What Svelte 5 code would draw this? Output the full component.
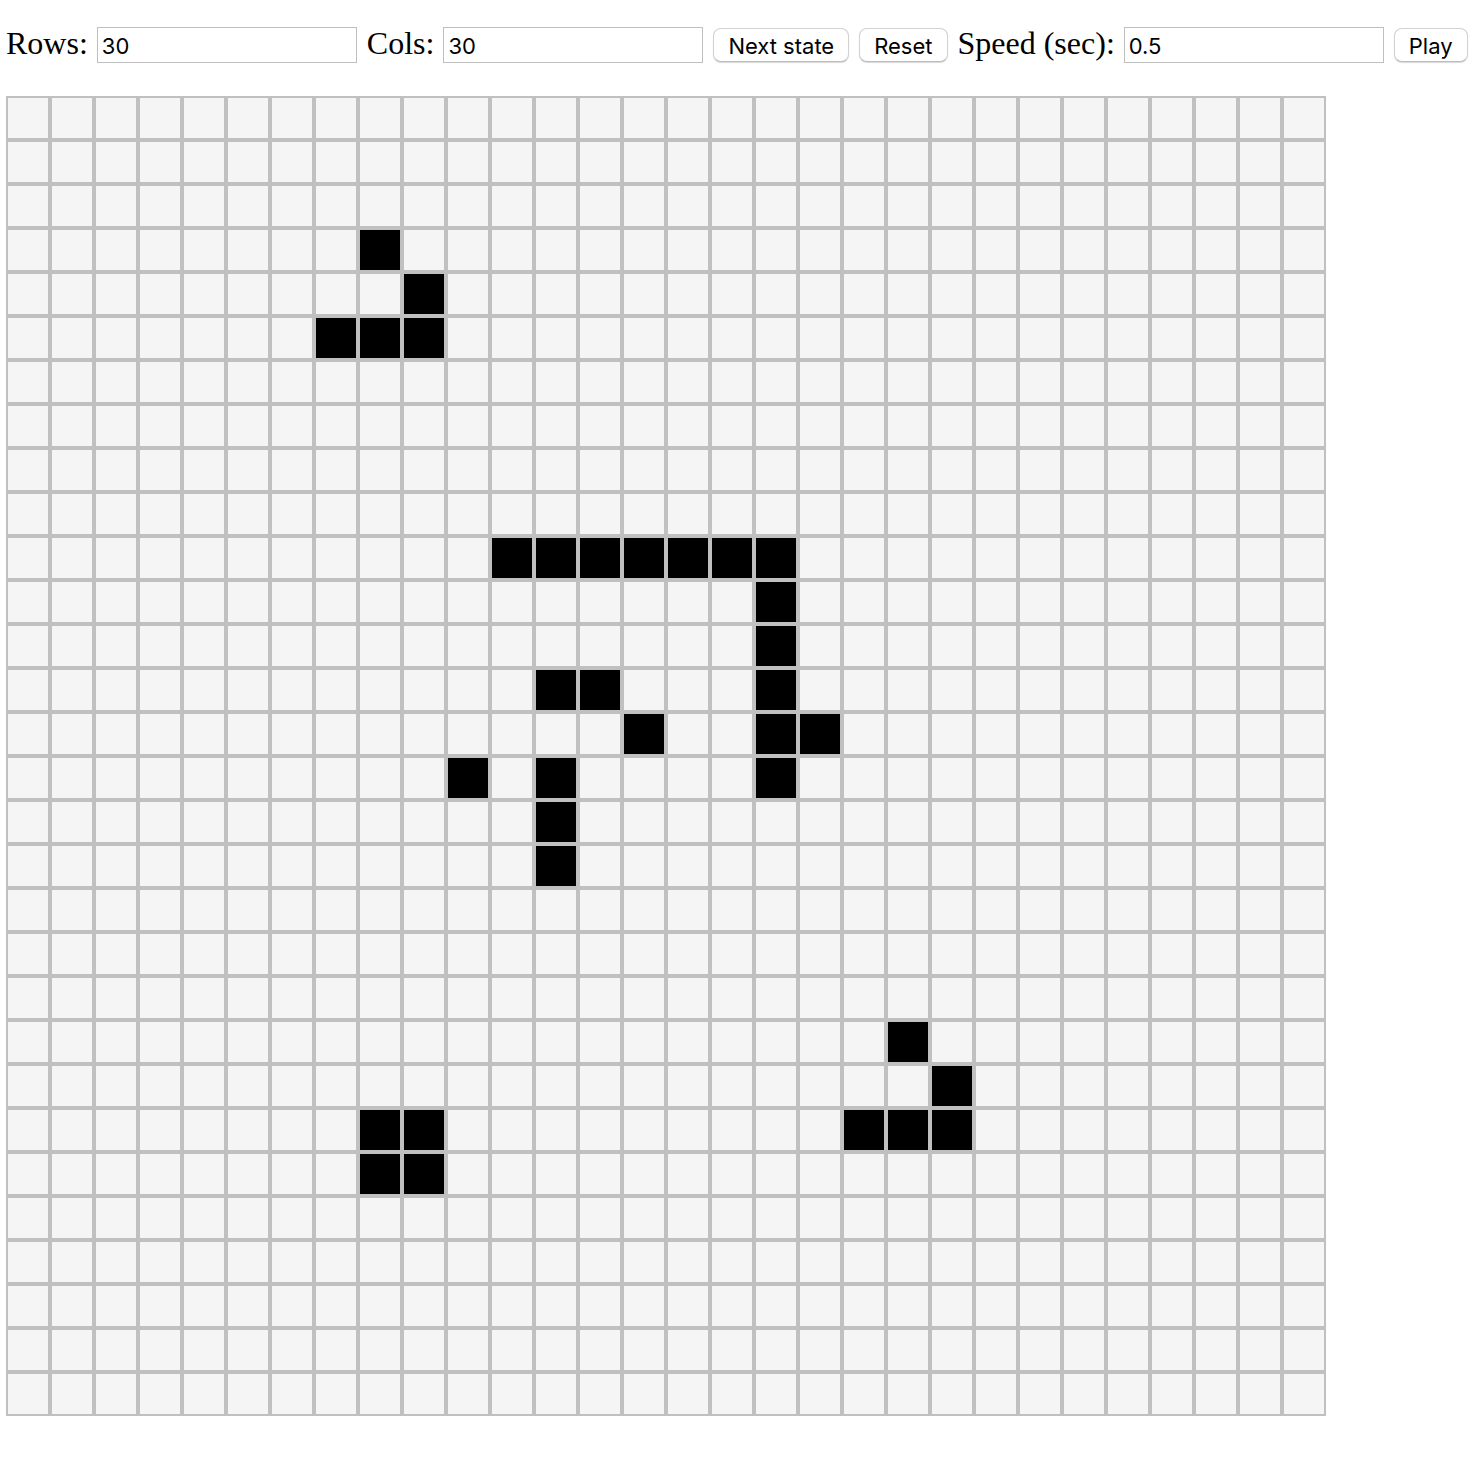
<script>
  const initial = [
    [3, 8],
    [4, 9],
    [5, 7], [5, 8], [5, 9],
    [10, 11], [10, 12], [10, 13], [10, 14], [10, 15], [10, 16], [10, 17],
    [11, 17],
    [12, 17],
    [13, 12], [13, 13], [13, 17],
    [14, 14], [14, 17], [14, 18],
    [15, 10], [15, 12], [15, 17],
    [16, 12],
    [17, 12],
    [21, 20],
    [22, 21],
    [23, 8], [23, 9], [23, 19], [23, 20], [23, 21],
    [24, 8], [24, 9],
  ];

  const key = (r, c) => `${r},${c}`;

  let rowsText = $state('30');
  let colsText = $state('30');
  let speed = $state('0.5');
  let playing = $state(false);
  let alive = $state.raw(new Set(initial.map(([r, c]) => key(r, c))));

  const clampSize = (text) => Math.min(100, Math.max(1, parseInt(text, 10) || 1));
  const rows = $derived(clampSize(rowsText));
  const cols = $derived(clampSize(colsText));

  function neighbours(r, c) {
    let count = 0;
    for (let dr = -1; dr <= 1; dr++) {
      for (let dc = -1; dc <= 1; dc++) {
        if ((dr || dc) && alive.has(key(r + dr, c + dc))) count++;
      }
    }
    return count;
  }

  function nextState() {
    const next = new Set();
    for (let r = 0; r < rows; r++) {
      for (let c = 0; c < cols; c++) {
        const n = neighbours(r, c);
        if (n === 3 || (n === 2 && alive.has(key(r, c)))) next.add(key(r, c));
      }
    }
    alive = next;
  }

  function reset() {
    playing = false;
    alive = new Set();
  }

  function toggle(r, c) {
    const next = new Set(alive);
    if (!next.delete(key(r, c))) next.add(key(r, c));
    alive = next;
  }

  $effect(() => {
    if (!playing) return;
    const seconds = Math.max(0.05, parseFloat(speed) || 0.5);
    const timer = setInterval(nextState, seconds * 1000);
    return () => clearInterval(timer);
  });
</script>

<main>
  <div class="toolbar">
    <div class="field">
      <label for="rows">Rows:</label>
      <input id="rows" type="text" inputmode="numeric" bind:value={rowsText} />
    </div>
    <div class="field">
      <label for="cols">Cols:</label>
      <input id="cols" type="text" inputmode="numeric" bind:value={colsText} />
    </div>
    <button class="action" type="button" onclick={nextState}>Next state</button>
    <button class="action" type="button" onclick={reset}>Reset</button>
    <div class="field">
      <label for="speed">Speed (sec):</label>
      <input id="speed" type="text" inputmode="decimal" bind:value={speed} />
    </div>
    <button class="action" type="button" onclick={() => (playing = !playing)}>
      {playing ? 'Stop' : 'Play'}
    </button>
  </div>

  <div class="board">
    {#each { length: rows } as _, r}
      <div class="row">
        {#each { length: cols } as _, c}
          <button
            class="cell"
            class:alive={alive.has(key(r, c))}
            type="button"
            aria-label={`Row ${r + 1}, column ${c + 1}`}
            aria-pressed={alive.has(key(r, c))}
            onclick={() => toggle(r, c)}
          ></button>
        {/each}
      </div>
    {/each}
  </div>
</main>

<style>
  :global(body) {
    margin: 0;
    background: #fff;
  }

  main {
    padding: 23px 6px;
    color: #000;
    font-family: 'Liberation Serif', 'Times New Roman', serif;
    font-size: 32px;
    line-height: 40px;
  }

  .toolbar {
    display: flex;
    flex-wrap: wrap;
    align-items: baseline;
    gap: 10px;
    margin-bottom: 33px;
  }

  .field {
    display: flex;
    align-items: baseline;
    gap: 9px;
  }

  input,
  .action {
    box-sizing: border-box;
    margin: 0;
    color: #000;
    font-family: Inter, 'Liberation Sans', sans-serif;
    font-size: 22px;
  }

  input {
    width: 260px;
    height: 36px;
    padding: 2px 4px 0;
    border: 1px solid #bfbfbf;
    border-radius: 0;
    background: #fff;
  }

  .action {
    height: 34px;
    padding: 2px 14px 0;
    border: 1px solid #d2d2d2;
    border-bottom-color: #bcbcbc;
    border-radius: 8px;
    background: #fff;
    box-shadow: 0 1px 1px #d8d8d8;
    line-height: 30px;
    white-space: nowrap;
  }

  .row {
    display: flex;
  }

  .cell {
    box-sizing: border-box;
    flex: none;
    width: 44px;
    height: 44px;
    margin: 0;
    padding: 0;
    border: 2px solid #c0c0c0;
    border-radius: 0;
    background: #f5f5f5;
  }

  .cell.alive {
    background: #000;
  }
</style>
